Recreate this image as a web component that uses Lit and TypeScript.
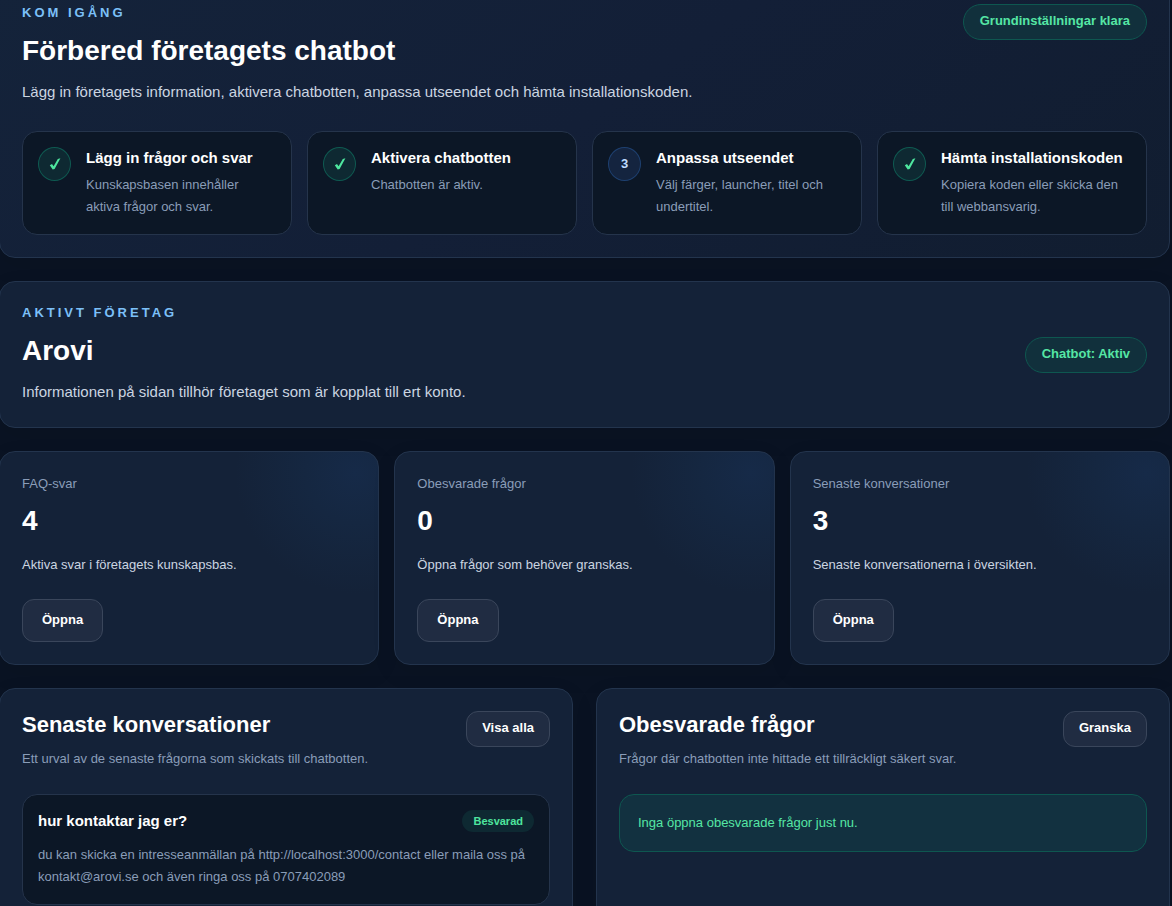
import { LitElement, html, css } from "lit";
import { customElement } from "lit/decorators.js";
import { classMap } from "lit/directives/class-map.js";

interface Step {
  title: string;
  text: string;
  done: boolean;
}

const steps: Step[] = [
  { title: "Lägg in frågor och svar", text: "Kunskapsbasen innehåller aktiva frågor och svar.", done: true },
  { title: "Aktivera chatbotten", text: "Chatbotten är aktiv.", done: true },
  { title: "Anpassa utseendet", text: "Välj färger, launcher, titel och undertitel.", done: false },
  { title: "Hämta installationskoden", text: "Kopiera koden eller skicka den till webbansvarig.", done: true },
];

const stats = [
  { label: "FAQ-svar", value: 4, text: "Aktiva svar i företagets kunskapsbas." },
  { label: "Obesvarade frågor", value: 0, text: "Öppna frågor som behöver granskas." },
  { label: "Senaste konversationer", value: 3, text: "Senaste konversationerna i översikten." },
];

@customElement("app-root")
export class AppRoot extends LitElement {
  static styles = css`
    :host {
      display: block;
      height: 100vh;
      overflow: hidden;
      background: #0a1323;
      color: #fff;
      font-family: "Liberation Sans", Arial, sans-serif;
      font-size: 13px;
      line-height: 22px;
    }
    * {
      box-sizing: border-box;
    }
    h1, h2, h3, p, ol, ul {
      margin: 0;
      padding: 0;
    }
    ol, ul {
      list-style: none;
    }
    /* The view is scrolled slightly past the top of the first panel. */
    main {
      display: flex;
      flex-direction: column;
      gap: 23px;
      min-height: calc(100vh + 40px);
      margin: -19px 2px 0 -1px;
    }
    .panel {
      padding: 22px;
      border: 1px solid #23344d;
      border-radius: 16px;
      background: #142238;
      box-shadow: 0 8px 24px rgba(0, 0, 0, 0.08);
    }
    .hero {
      background: linear-gradient(145deg, #14233a, #131f37 50%, #111d30);
    }
    .row {
      display: flex;
      justify-content: space-between;
      align-items: flex-start;
      gap: 15px;
    }
    .row.middle {
      align-items: center;
    }
    .eyebrow {
      color: #7cc0f8;
      font-weight: 700;
      line-height: 18px;
      letter-spacing: 3px;
      text-transform: uppercase;
    }
    h1 {
      margin-top: 11px;
      font-size: 28px;
      line-height: 36px;
    }
    .lead {
      margin-top: 10px;
      color: #cbd5e1;
      font-size: 15px;
      line-height: 26px;
    }
    .pill {
      padding: 7px 16px 9px;
      border: 1px solid #0e5750;
      border-radius: 18px;
      background: #11303c;
      color: #55e6a5;
      font-weight: 700;
      line-height: 18px;
      white-space: nowrap;
    }
    .steps {
      display: grid;
      grid-template-columns: repeat(4, 1fr);
      gap: 15px;
      margin-top: 26px;
    }
    .step, .talk {
      padding: 15px;
      border: 1px solid #25344b;
      border-radius: 15px;
      background: #0c1726;
    }
    .step {
      display: flex;
      gap: 15px;
    }
    .mark {
      flex: none;
      display: grid;
      place-items: center;
      width: 33px;
      height: 34px;
      border: 1px solid #1e4070;
      border-radius: 50%;
      background: #14243f;
      color: #bfdbfe;
      font-weight: 700;
    }
    .mark.done {
      border-color: #0f5a51;
      background: #0e2932;
      color: #4ee69f;
    }
    .mark svg {
      width: 12px;
      height: 14px;
    }
    h3 {
      font-size: 15px;
      line-height: 22px;
    }
    .muted {
      color: #8a9db8;
    }
    .step .muted {
      margin-top: 5px;
      padding-bottom: 1px;
    }
    .stats {
      display: grid;
      grid-template-columns: repeat(3, 1fr);
      gap: 15px;
    }
    .stat {
      background: radial-gradient(circle at 94% 10%, #162a48, #152741 50px, #142238 120px);
    }
    .stat .muted {
      line-height: 20px;
    }
    .value {
      margin-top: 9px;
      font-size: 28px;
      font-weight: 700;
      line-height: 36px;
    }
    .note {
      margin-top: 15px;
      color: #cbd5e1;
    }
    button {
      border: 1px solid #3a465b;
      border-radius: 12px;
      background: #202c42;
      color: #fff;
      font: inherit;
      font-weight: 700;
      line-height: 18px;
      white-space: nowrap;
    }
    .open {
      margin-top: 23px;
      padding: 11px 19px 12px;
    }
    .small {
      padding: 7px 15px 9px;
    }
    .columns {
      flex: 1;
      display: grid;
      grid-template-columns: repeat(2, 1fr);
      gap: 23px;
    }
    h2 {
      font-size: 22px;
      line-height: 28px;
    }
    .sub {
      margin-top: 9px;
    }
    .talk {
      margin-top: 24px;
    }
    .talk .muted {
      margin-top: 12px;
      padding-bottom: 1px;
    }
    .badge {
      padding: 0 11px;
      border-radius: 11px;
      background: #0e2932;
      color: #4ee69f;
      font-size: 11px;
      font-weight: 700;
    }
    .empty {
      margin-top: 24px;
      padding: 17px 18px;
      border: 1px solid #0e5750;
      border-radius: 15px;
      background: #123140;
      color: #55e6a5;
    }
  `;

  private renderStep(step: Step, index: number) {
    return html`
      <li class="step">
        <span class=${classMap({ mark: true, done: step.done })}>
          ${step.done
            ? html`<svg viewBox="0 0 12 14" role="img" aria-label="Klart">
                <path d="M0.8 8.3 3 7 4.6 9.2 8.8 1.9 11.4 1.2 5.6 12 3.7 12.6Z" fill="currentColor" />
              </svg>`
            : index + 1}
        </span>
        <div>
          <h3>${step.title}</h3>
          <p class="muted">${step.text}</p>
        </div>
      </li>
    `;
  }

  render() {
    return html`
      <main>
        <section class="panel hero">
          <div class="row">
            <div>
              <p class="eyebrow">Kom igång</p>
              <h1>Förbered företagets chatbot</h1>
              <p class="lead">
                Lägg in företagets information, aktivera chatbotten, anpassa utseendet och hämta installationskoden.
              </p>
            </div>
            <span class="pill">Grundinställningar klara</span>
          </div>
          <ol class="steps">
            ${steps.map((step, index) => this.renderStep(step, index))}
          </ol>
        </section>

        <section class="panel">
          <div class="row middle">
            <div>
              <p class="eyebrow">Aktivt företag</p>
              <h1>Arovi</h1>
              <p class="lead">Informationen på sidan tillhör företaget som är kopplat till ert konto.</p>
            </div>
            <span class="pill">Chatbot: Aktiv</span>
          </div>
        </section>

        <section class="stats">
          ${stats.map(
            (stat) => html`
              <article class="panel stat">
                <p class="muted">${stat.label}</p>
                <p class="value">${stat.value}</p>
                <p class="note">${stat.text}</p>
                <button class="open" type="button">Öppna</button>
              </article>
            `
          )}
        </section>

        <div class="columns">
          <section class="panel">
            <div class="row">
              <div>
                <h2>Senaste konversationer</h2>
                <p class="muted sub">Ett urval av de senaste frågorna som skickats till chatbotten.</p>
              </div>
              <button class="small" type="button">Visa alla</button>
            </div>
            <article class="talk">
              <div class="row">
                <h3>hur kontaktar jag er?</h3>
                <span class="badge">Besvarad</span>
              </div>
              <p class="muted">
                du kan skicka en intresseanmällan på http://localhost:3000/contact eller maila oss på
                kontakt@arovi.se och även ringa oss på 0707402089
              </p>
            </article>
          </section>

          <section class="panel">
            <div class="row">
              <div>
                <h2>Obesvarade frågor</h2>
                <p class="muted sub">Frågor där chatbotten inte hittade ett tillräckligt säkert svar.</p>
              </div>
              <button class="small" type="button">Granska</button>
            </div>
            <p class="empty">Inga öppna obesvarade frågor just nu.</p>
          </section>
        </div>
      </main>
    `;
  }
}
